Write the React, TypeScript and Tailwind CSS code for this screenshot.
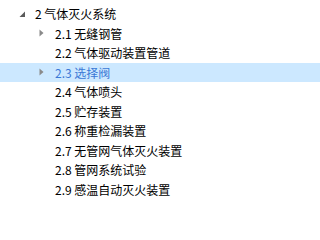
import React from 'react';

type Node = { label: string; level: number; state?: 'open' | 'closed'; selected?: boolean };

const nodes: Node[] = [
  { label: '2 气体灭火系统', level: 0, state: 'open' },
  { label: '2.1 无缝钢管', level: 1, state: 'closed' },
  { label: '2.2 气体驱动装置管道', level: 1 },
  { label: '2.3 选择阀', level: 1, state: 'closed', selected: true },
  { label: '2.4 气体喷头', level: 1 },
  { label: '2.5 贮存装置', level: 1 },
  { label: '2.6 称重检漏装置', level: 1 },
  { label: '2.7 无管网气体灭火装置', level: 1 },
  { label: '2.8 管网系统试验', level: 1 },
  { label: '2.9 感温自动灭火装置', level: 1 },
];

const Arrow = ({ state }: { state?: 'open' | 'closed' }) => {
  if (state === 'open') {
    return (
      <svg width="7" height="7" viewBox="0 0 7 7" className="ml-[4px] mt-[1px]">
        <path d="M6 0.5 L6 6 L0.5 6 Z" fill="#5a5a5a" />
      </svg>
    );
  }
  if (state === 'closed') {
    return (
      <svg width="5" height="8" viewBox="0 0 5 8" className="ml-[4px]">
        <path d="M0.5 0.5 L4.5 4 L0.5 7.5 Z" fill="#8a8a8a" />
      </svg>
    );
  }
  return null;
};

export default function App() {
  return (
    <div
      className="w-full min-h-[204px] bg-white pt-[4px] overflow-hidden text-[12px] text-black"
      style={{ fontFamily: '"Noto Sans CJK SC", "Noto Sans", sans-serif' }}
    >
      {nodes.map((n) => (
        <div
          key={n.label}
          className={`flex items-center h-[19.5px] ${n.selected ? 'bg-[#cce8ff]' : ''}`}
          style={{ paddingLeft: 15 + n.level * 20 }}
        >
          <div className="w-[20px] flex items-center">
            <Arrow state={n.state} />
          </div>
          <span className={`whitespace-nowrap leading-[19px] ${n.selected ? 'text-[#3a78d6]' : ''}`}>
            {n.label}
          </span>
        </div>
      ))}
    </div>
  );
}
